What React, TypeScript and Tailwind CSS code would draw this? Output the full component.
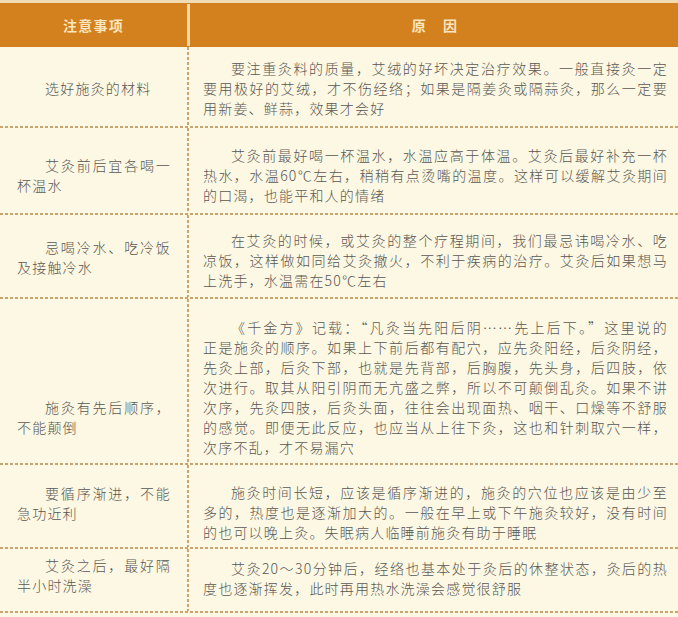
import React from "react";

type Row = {
  h: string;
  lpt: string;
  rpt: string;
  left: string[];
  right: string[];
};

const rows: Row[] = [
  {
    h: "h-[79px]",
    lpt: "pt-[31px]",
    rpt: "pt-[11px]",
    left: ["选好施灸的材料"],
    right: [
      "要注重灸料的质量，艾绒的好坏决定治疗效果。一般直接灸一定",
      "要用极好的艾绒，才不伤经络；如果是隔姜灸或隔蒜灸，那么一定要",
      "用新姜、鲜蒜，效果才会好",
    ],
  },
  {
    h: "h-[85px]",
    lpt: "pt-[27px]",
    rpt: "pt-[17px]",
    left: ["艾灸前后宜各喝一", "杯温水"],
    right: [
      "艾灸前最好喝一杯温水，水温应高于体温。艾灸后最好补充一杯",
      "热水，水温60℃左右，稍稍有点烫嘴的温度。这样可以缓解艾灸期间",
      "的口渴，也能平和人的情绪",
    ],
  },
  {
    h: "h-[82px]",
    lpt: "pt-[22px]",
    rpt: "pt-[15px]",
    left: ["忌喝冷水、吃冷饭", "及接触冷水"],
    right: [
      "在艾灸的时候，或艾灸的整个疗程期间，我们最忌讳喝冷水、吃",
      "凉饭，这样做如同给艾灸撤火，不利于疾病的治疗。艾灸后如果想马",
      "上洗手，水温需在50℃左右",
    ],
  },
  {
    h: "h-[164px]",
    lpt: "pt-[98px]",
    rpt: "pt-[18px]",
    left: ["施灸有先后顺序，", "不能颠倒"],
    right: [
      "《千金方》记载：“凡灸当先阳后阴……先上后下。”这里说的",
      "正是施灸的顺序。如果上下前后都有配穴，应先灸阳经，后灸阴经，",
      "先灸上部，后灸下部，也就是先背部，后胸腹，先头身，后四肢，依",
      "次进行。取其从阳引阴而无亢盛之弊，所以不可颠倒乱灸。如果不讲",
      "次序，先灸四肢，后灸头面，往往会出现面热、咽干、口燥等不舒服",
      "的感觉。即便无此反应，也应当从上往下灸，这也和针刺取穴一样，",
      "次序不乱，才不易漏穴",
    ],
  },
  {
    h: "h-[82px]",
    lpt: "pt-[18px]",
    rpt: "pt-[17px]",
    left: ["要循序渐进，不能", "急功近利"],
    right: [
      "施灸时间长短，应该是循序渐进的，施灸的穴位也应该是由少至",
      "多的，热度也是逐渐加大的。一般在早上或下午施灸较好，没有时间",
      "的也可以晚上灸。失眠病人临睡前施灸有助于睡眠",
    ],
  },
  {
    h: "h-[62px]",
    lpt: "pt-[6px]",
    rpt: "pt-[9px]",
    left: ["艾灸之后，最好隔", "半小时洗澡"],
    right: [
      "艾灸20～30分钟后，经络也基本处于灸后的休整状态，灸后的热",
      "度也逐渐挥发，此时再用热水洗澡会感觉很舒服",
    ],
  },
];

function Lines({ lines }: { lines: string[] }) {
  return (
    <>
      {lines.map((t, i) => {
        const last = i === lines.length - 1;
        const cls = [
          "whitespace-nowrap h-[20px] leading-[20px]",
          i === 0 ? "indent-[28px]" : "",
          last ? "text-left" : "text-justify [text-align-last:justify]",
        ].join(" ");
        return (
          <div key={i} className={cls}>
            {t}
          </div>
        );
      })}
    </>
  );
}

function HDots() {
  return (
    <div className="h-[2px] w-full bg-[linear-gradient(to_right,#caa46c_60%,transparent_60%)] bg-[length:5px_2px]" />
  );
}

function VDots() {
  return (
    <div className="w-[2px] shrink-0 self-stretch bg-[linear-gradient(to_bottom,#caa46c_60%,transparent_60%)] bg-[length:2px_5px]" />
  );
}

export default function App() {
  return (
    <div
      className="w-full h-[617px] overflow-hidden bg-[#fcf8e3] text-[#595754] text-[14px] font-light tracking-[1.2px]"
      style={{ fontFamily: '"Noto Sans CJK SC", "Noto Sans", sans-serif' }}
    >
      <div className="h-[3px] bg-[#efdcb4]" />
      <div className="flex h-[44px] bg-[#d3801f] text-[#fbe6bd] font-bold">
        <div className="w-[187px] flex items-center justify-center">注意事项</div>
        <div className="w-[3px] my-[1px] bg-[#f6d9a2]" />
        <div className="flex-1 flex items-center justify-center gap-[16px] pl-[2px]">
          <span>原</span>
          <span>因</span>
        </div>
      </div>
      {rows.map((r, idx) => (
        <React.Fragment key={idx}>
          {idx > 0 && <HDots />}
          <div className={`flex ${r.h}`}>
            <div className={`w-[187px] shrink-0 pl-[17px] pr-[16px] ${r.lpt}`}>
              <Lines lines={r.left} />
            </div>
            <VDots />
            <div className={`flex-1 min-w-0 pl-[14px] pr-[10px] ${r.rpt}`}>
              <Lines lines={r.right} />
            </div>
          </div>
        </React.Fragment>
      ))}
      <HDots />
    </div>
  );
}
